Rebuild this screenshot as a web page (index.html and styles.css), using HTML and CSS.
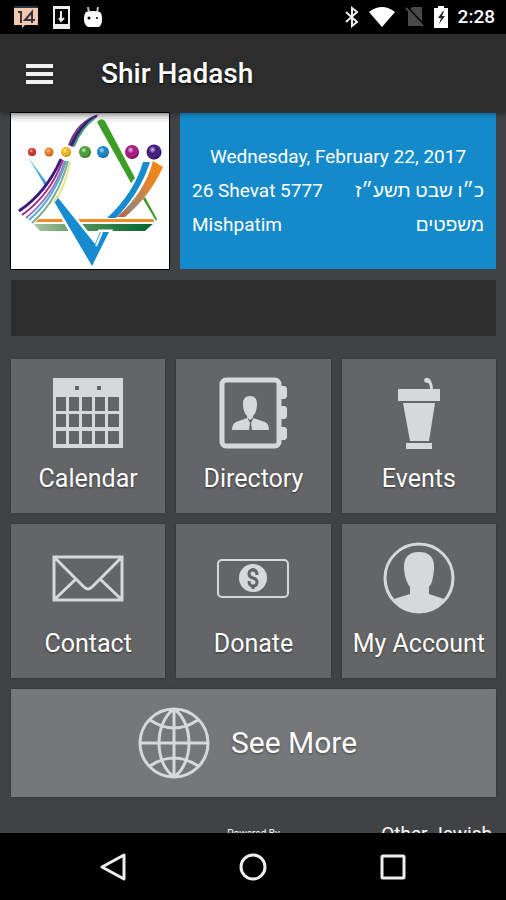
FILE: index.html
```html
<!DOCTYPE html>
<html lang="en">
<head>
<meta charset="utf-8">
<meta name="viewport" content="width=device-width, initial-scale=1">
<title>Shir Hadash</title>
<link rel="stylesheet" href="styles.css">
</head>
<body>
<div class="screen">
  <div class="status">
    <div class="status-group notifications">
      <svg width="26" height="24" viewBox="0 0 26 24" aria-hidden="true"><path d="M1 1h24v19H12l-3 3v-3H1z" fill="#f3c6ae"/><path d="M1 1h24v2H1z" fill="#26344d"/><path d="M5 7h3v11M19 18V7l-7 8h10" fill="none" stroke="#35333b" stroke-width="2"/></svg>
      <svg width="17" height="24" viewBox="0 0 17 24" aria-hidden="true"><path fill="#eee" fill-rule="evenodd" d="M0 1h17v23H0zM2 4v15h13V4z"/><path d="M8 6v10M6 13l2 3 3-3" fill="none" stroke="#eee" stroke-width="2"/></svg>
      <svg width="18" height="21" viewBox="0 0 18 21" aria-hidden="true"><path d="M4 0l1 6M14 0l-1 6" stroke="#bbb" stroke-width="2"/><path d="M2 5q7-2 14 0 2 2 2 7 0 6-3 8H4q-4-2-4-8 0-5 2-7z" fill="#fff"/><circle cx="5" cy="11" r="1.5"/><circle cx="13" cy="11" r="1"/></svg>
    </div>
    <div class="status-group">
      <svg width="14" height="22" viewBox="0 0 14 22" aria-hidden="true"><path d="M1 6l11 10-5 4V2l5 4L1 16" fill="none" stroke="#eee" stroke-width="2"/></svg>
      <svg width="26" height="20" viewBox="0 0 26 20" aria-hidden="true"><path d="M0 5Q13-5 26 5L13 20z" fill="#fff"/></svg>
      <svg width="19" height="20" viewBox="0 0 19 20" aria-hidden="true"><path d="M7 0h10v19H3V4z" fill="#494949"/><path d="M2 0l17 18" stroke="#000" stroke-width="2"/><path d="M1 1l17 18" stroke="#494949" stroke-width="2"/></svg>
      <svg width="14" height="22" viewBox="0 0 14 22" aria-hidden="true"><path d="M4 0h6v2h4v20H0V2h4z" fill="#fff"/><path d="M9 5l-5 7h3l-2 6 6-8H8l2-5z" fill="#222"/></svg>
      <span class="clock">2:28</span>
    </div>
  </div>
  <header class="appbar">
    <button class="menu" aria-label="Menu"><svg width="27" height="20" viewBox="0 0 27 20"><path d="M0 2h27M0 10h27M0 18h27" stroke="#f0f0f0" stroke-width="4"/></svg></button>
    <h1>Shir Hadash</h1>
  </header>
  <main>
    <section class="hero">
      <svg class="logo" viewBox="0 0 158 156" role="img" aria-label="Shir Hadash logo">
        <defs>
          <linearGradient id="shade" x1="0" y1="0" x2="0" y2="1"><stop offset="0" stop-color="#ccc"/><stop offset="1" stop-color="#fff"/></linearGradient>
          <linearGradient id="green"><stop offset="0" stop-color="#a9c4a4"/><stop offset=".5" stop-color="#438b51"/><stop offset="1" stop-color="#006330"/></linearGradient>
          <linearGradient id="orange" x1="1" y1="0" x2="0" y2="1"><stop offset="0" stop-color="#f58410"/><stop offset=".35" stop-color="#e6842b"/><stop offset=".75" stop-color="#9b8873"/><stop offset="1" stop-color="#c85a2e"/></linearGradient>
          <linearGradient id="blue" x1="0" y1="0" x2="0" y2="1"><stop offset="0" stop-color="#76bfe8"/><stop offset=".4" stop-color="#178bd0"/></linearGradient>
          <radialGradient id="shine" cx=".4" cy=".35" r=".65"><stop offset="0" stop-color="#fff" stop-opacity=".75"/><stop offset=".4" stop-color="#fff" stop-opacity="0"/><stop offset="1" stop-color="#000" stop-opacity=".3"/></radialGradient>
        </defs>
        <path d="M0 0h158v156H0z" fill="#fff"/><path d="M0 0h158v10H0z" fill="url(#shade)"/>
        <path d="M86 9q4-5 8-1l30 57-4 5z" fill="#3c9e26"/><path d="M134 84l12 22-1 2-13-22z" fill="#3c9e26"/>
        <path d="M132 49h7Q129 80 105 105h-9Q123 80 132 49z" fill="#178bd0"/>
        <path d="M142 48l10 6Q139 83 114 104h-8Q134 79 142 48z" fill="url(#orange)"/>
        <path d="M22 106h120l1 4-9 8H29l-7-8z" fill="url(#green)"/><path d="M22 109h122v2H22z" fill="#fff"/><path d="M22 106h120v3H22z" fill="#f28b20"/>
        <path d="M17 44l31 42 36 45 5-12h9L81 153z" fill="#fff" stroke="#fff" stroke-width="5"/>
        <path d="M17 44l31 42 36 45 5-12h9L81 153z" fill="url(#blue)"/>
        <path d="M85 133l6-14" stroke="#fff" stroke-width="2"/>
        <path d="M50 46Q37 81 8 98L22 111Q48 91 60 48z" fill="#fff"/>
        <g fill="none" stroke-width="2"><path d="M50 46Q35 80 8 98" stroke="#3b187f" stroke-width="3"/><path d="M52 47Q39 82 11 102" stroke="#a52a86"/><path d="M54 48Q42 83 15 105" stroke="#9978bb"/><path d="M55 48Q43 86 18 107" stroke="#4bacd8"/><path d="M57 48Q47 87 21 110" stroke="#82a990"/><path d="M59 49Q53 78 42 90" stroke="#e4e68c"/></g>
        <path d="M57 32Q66 7 88 1L80 8Q69 17 63 34z" fill="#66427d"/><path d="M60 33Q70 10 86 3" fill="none" stroke="#3b187f" stroke-width="2"/><path d="M63 33Q71 14 84 5" fill="none" stroke="#399d74" stroke-width="2"/>
        <g><circle cx="21" cy="39" r="4" fill="#d42c25"/><circle cx="38" cy="39" r="4.5" fill="#ef7b22"/><circle cx="55" cy="39" r="5" fill="#f5b814"/><circle cx="74" cy="39" r="6" fill="#439d2a"/><circle cx="92" cy="39" r="6" fill="#1583c8"/><circle cx="121" cy="39" r="7" fill="#a41482"/><circle cx="143" cy="39" r="7.5" fill="#40147b"/></g>
        <g fill="url(#shine)"><circle cx="21" cy="39" r="4"/><circle cx="38" cy="39" r="4.5"/><circle cx="55" cy="39" r="5"/><circle cx="74" cy="39" r="6"/><circle cx="92" cy="39" r="6"/><circle cx="121" cy="39" r="7"/><circle cx="143" cy="39" r="7.5"/></g>
      </svg>
      <div class="date-card">
        <p class="today">Wednesday, February 22, 2017</p>
        <p class="pair"><span>26 Shevat 5777</span><span lang="he" dir="rtl">כ״ו שבט תשע״ז</span></p>
        <p class="pair"><span>Mishpatim</span><span lang="he" dir="rtl">משפטים</span></p>
      </div>
    </section>
    <div class="banner"></div>
    <nav class="tiles">
      <a class="tile" href="#calendar"><svg viewBox="0 0 72 72"><path fill-rule="evenodd" d="M1 1h70v70H1zM4 20v14h10V20zM17 20v14h10V20zM30 20v14h10V20zM43 20v14h10V20zM56 20v14h11V20zM4 37v13h10V37zM17 37v13h10V37zM30 37v13h10V37zM43 37v13h10V37zM56 37v13h11V37zM4 54v13h10V54zM17 54v13h10V54zM30 54v13h10V54zM43 54v13h10V54zM56 54v13h11V54zM23 9v4h4V9zM45 9v4h4V9z"/></svg><span>Calendar</span></a>
      <a class="tile" href="#directory"><svg viewBox="0 0 72 72"><rect class="line" x="5" y="3" width="57" height="66" rx="4" stroke-width="5"/><path d="M64 9h4l2 2v9l-2 2h-4zM64 29h4l2 2v9l-2 2h-4zM64 50h4l2 2v9l-2 2h-4z"/><path d="M26 27q0-8 7-8t7 8q0 8-4 12v2l12 4q4 2 4 8H15q0-6 4-8l11-4v-2q-4-4-4-12z"/><path class="cut" d="M30 40l3 3 4-3-3 6 1 7h-3l1-7z"/></svg><span>Directory</span></a>
      <a class="tile" href="#events"><svg viewBox="0 0 72 72"><path d="M15 12h32q0-5-2-6-4 0-4-3 1-3 4-2 4 1 5 11h7v12H15zM20 26h32l-6 38H27zM23 66h26v6H23z"/></svg><span>Events</span></a>
      <a class="tile" href="#contact"><svg viewBox="0 0 72 72"><path class="line" stroke-width="3" d="M2 15h68v43H2zM3 16l29 29q4 4 8 0L69 16M3 57l21-20M69 57L48 37"/></svg><span>Contact</span></a>
      <a class="tile" href="#donate"><svg viewBox="0 0 72 72"><rect class="line" x="1" y="18" width="70" height="37" rx="4" stroke-width="2"/><circle cx="36" cy="36" r="14"/><path class="cut-line" d="M40 33q0-5-4-5t-4 4q0 3 4 4t4 4q0 4-4 4t-4-5M36 26v3M36 44v3"/></svg><span>Donate</span></a>
      <a class="tile" href="#account"><svg viewBox="0 0 72 72"><circle class="line" cx="36" cy="36" r="34" stroke-width="3"/><path d="M36 10q16 0 15 17-1 14-5 18v7l15 5q-10 14-25 14T11 57l16-5v-7q-5-6-6-18-1-17 15-17z"/></svg><span>My Account</span></a>
      <a class="more" href="#more"><svg viewBox="0 0 72 72"><path class="line" stroke-width="3" d="M36 2a34 34 0 1 0 0 68 34 34 0 1 0 0-68v68M2 36h68M36 2C16 16 16 56 36 70M36 2c20 14 20 54 0 68M12 13q24 16 48 0M12 59q24-16 48 0"/></svg><span>See More</span></a>
    </nav>
    <footer class="credits"><span class="powered">Powered By</span><a href="#other">Other Jewish</a></footer>
  </main>
  <nav class="system">
    <button aria-label="Back"><svg width="28" height="28" viewBox="0 0 28 28"><path d="M25 2v24L3 14z"/></svg></button>
    <button aria-label="Home"><svg width="28" height="28" viewBox="0 0 28 28"><circle cx="14" cy="14" r="12"/></svg></button>
    <button aria-label="Recent apps"><svg width="28" height="28" viewBox="0 0 28 28"><rect x="3" y="3" width="22" height="22" rx="1"/></svg></button>
  </nav>
</div>
</body>
</html>
```

FILE: styles.css
```css
* { box-sizing: border-box; }
body { margin: 0; background: #414244; color: #fff; font-family: Roboto, "Liberation Sans", sans-serif; }
h1, p { margin: 0; }
a { color: inherit; text-decoration: none; }
button { padding: 0; border: 0; background: none; display: flex; }
.screen { height: 100vh; display: flex; flex-direction: column; overflow: hidden; }
.status { flex: none; height: 34px; padding: 0 11px 0 13px; background: #000; display: flex; justify-content: space-between; align-items: center; }
.status-group { display: flex; align-items: center; gap: 10px; }
.notifications { gap: 14px; }
.clock { font-size: 19px; font-weight: 500; line-height: 24px; }
.appbar { flex: none; height: 78px; padding: 2px 26px 0; background: #2d2d2d; display: flex; align-items: center; gap: 48px; box-shadow: 0 2px 5px #0006; z-index: 1; }
h1 { font-size: 28px; line-height: 32px; font-weight: 500; text-shadow: 0 1px 2px #000; }
main { flex: 1; min-height: 0; overflow: hidden; padding: 1px 10px 0 11px; }
.hero { display: grid; grid-template-columns: 1fr 2fr; gap: 11px; }
.logo { display: block; width: 100%; outline: 1px solid #000; }
.date-card { background: #158aca; padding: 0 12px; display: flex; flex-direction: column; justify-content: center; gap: 10px; font-size: 19px; line-height: 24px; }
.today { text-align: center; }
.pair { display: flex; justify-content: space-between; }
.banner { height: 56px; margin: 11px 0 23px; background: #2d2d2d; }
.tiles { display: grid; grid-template-columns: repeat(3, 1fr); gap: 11px; }
.tile { height: 154px; padding-top: 18px; background: #646567; display: flex; flex-direction: column; align-items: center; gap: 14px; font-size: 25px; line-height: 32px; text-shadow: 0 1px 2px #333; box-shadow: 0 0 2px #2d2d2d; white-space: nowrap; }
.tile svg, .more svg { width: 72px; height: 72px; fill: #d7d8da; }
.tile .line, .more .line { fill: none; stroke: #d7d8da; }
.cut { fill: #646567; }
.cut-line { fill: none; stroke: #646567; stroke-width: 3; }
.more { grid-column: 1 / -1; height: 108px; padding-right: 12px; background: #767779; display: flex; align-items: center; justify-content: center; gap: 21px; font-size: 30px; line-height: 36px; text-shadow: 0 1px 2px #444; box-shadow: 0 0 2px #2d2d2d; }
.credits { display: grid; grid-template-columns: 1fr auto 1fr; padding: 25px 4px 0; font-size: 19px; line-height: 24px; }
.powered { grid-column: 2; font-size: 10px; line-height: 24px; }
.credits a { justify-self: end; }
.system { flex: none; height: 67px; background: #000; display: flex; align-items: center; justify-content: center; gap: 112px; }
.system svg { fill: none; stroke: #eee; stroke-width: 3; stroke-linejoin: round; }
```
